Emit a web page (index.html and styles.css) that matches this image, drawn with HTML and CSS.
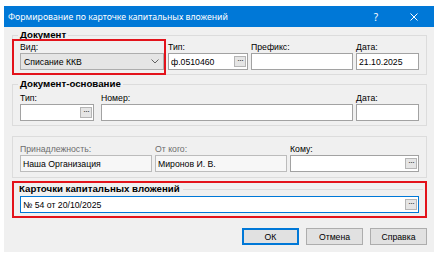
FILE: index.html
```html
<!DOCTYPE html>
<html lang="ru">
<head>
<meta charset="utf-8">
<title>Формирование по карточке капитальных вложений</title>
<link rel="stylesheet" href="styles.css">
</head>
<body>
<div class="win">
  <div class="titlebar">
    <span class="ttl">Формирование по карточке капитальных вложений</span>
    <span class="help">?</span>
    <svg class="close" width="8" height="8" viewBox="0 0 8 8"><path d="M0.5 0.5L7.5 7.5M7.5 0.5L0.5 7.5" stroke="#fff" stroke-width="1" fill="none"/></svg>
  </div>
  <div class="content">
    <div class="group g1">
      <div class="gtitle">Документ</div>
      <div class="row r1">
        <div class="cell">
          <div class="lbl">Вид:</div>
          <div class="combo"><span>Списание ККВ</span><svg class="chev" width="8" height="5" viewBox="0 0 8 5"><path d="M0.5 0.5L4 4L7.5 0.5" stroke="#606060" stroke-width="1" fill="none"/></svg></div>
        </div>
        <div class="cell">
          <div class="lbl">Тип:</div>
          <div class="field"><span class="val">ф.0510460</span><span class="dots">···</span></div>
        </div>
        <div class="cell">
          <div class="lbl">Префикс:</div>
          <div class="field"></div>
        </div>
        <div class="cell">
          <div class="lbl">Дата:</div>
          <div class="field"><span class="val">21.10.2025</span></div>
        </div>
      </div>
      <div class="mark"></div>
    </div>

    <div class="group g2">
      <div class="gtitle">Документ-основание</div>
      <div class="row r2">
        <div class="cell">
          <div class="lbl">Тип:</div>
          <div class="field"><span class="val"></span><span class="dots">···</span></div>
        </div>
        <div class="cell">
          <div class="lbl">Номер:</div>
          <div class="field"></div>
        </div>
        <div class="cell">
          <div class="lbl">Дата:</div>
          <div class="field"></div>
        </div>
      </div>
    </div>

    <div class="group g3">
      <div class="row r3">
        <div class="cell">
          <div class="lbl dim">Принадлежность:</div>
          <div class="field ro"><span class="val">Наша Организация</span></div>
        </div>
        <div class="cell">
          <div class="lbl dim">От кого:</div>
          <div class="field ro"><span class="val">Миронов И. В.</span></div>
        </div>
        <div class="cell">
          <div class="lbl">Кому:</div>
          <div class="field"><span class="val"></span><span class="dots">···</span></div>
        </div>
      </div>
    </div>

    <div class="hlgroup">
      <div class="hltitle"><span>Карточки капитальных вложений</span></div>
      <div class="field focus"><span class="val">№ 54 от 20/10/2025</span><span class="dots">···</span></div>
    </div>

    <div class="buttons">
      <button class="btn default">ОК</button>
      <button class="btn">Отмена</button>
      <button class="btn">Справка</button>
    </div>
  </div>
</div>
</body>
</html>
```

FILE: styles.css
```css
* { box-sizing: border-box; }
html, body { margin: 0; padding: 0; background: #ffffff; }
body {
  font-family: "Liberation Sans", Arial, sans-serif;
  font-size: 8.7px;
  color: #000;
}
.win {
  margin: 6px 0 0 4px;
  width: 430px;
  height: 246px;
  background: #f0f0f0;
  display: flex;
  flex-direction: column;
}
.titlebar {
  height: 21px;
  background: #0078d7;
  color: #fff;
  display: flex;
  align-items: center;
  padding-left: 4px;
  font-family: "Noto Sans", sans-serif;
  font-size: 8.7px;
}
.ttl { flex: 1; white-space: nowrap; }
.help { margin-right: 32px; font-size: 10px; }
.close { margin-right: 16px; }
.content { flex: 1; display: flex; flex-direction: column; }

.group {
  position: relative;
  border: 1px solid #dcdcdc;
  margin: 0 7px 0 8px;
  padding: 0 7px 4px 7px;
}
.g1 { margin-top: 8px; }
.g2 { margin-top: 9px; }
.g3 { margin-top: 10px; padding-top: 6px; padding-bottom: 5px; }
.gtitle {
  width: fit-content;
  margin-top: -8px;
  margin-left: -2px;
  padding: 0 2px;
  height: 13px;
  line-height: 13px;
  font-weight: bold;
  font-size: 9.7px;
  background: #f0f0f0;
}
.row { display: grid; column-gap: 3px; }
.r1 { grid-template-columns: 145px 80px 102px 63px; }
.r2 { grid-template-columns: 78px 1fr 63px; margin-top: 2px; }
.r2 .cell:first-child .field { width: 74px; }
.r3 { grid-template-columns: 132px 132px 1fr; }
.lbl { height: 12px; line-height: 12px; white-space: nowrap; }
.lbl.dim { color: #6d6d6d; }

.field {
  height: 17px;
  border: 1px solid #a2a2a2;
  background: #fff;
  display: flex;
  align-items: center;
  padding: 0 1px 0 2px;
}
.field.ro { background: #f7f7f7; border-color: #bcbcbc; }
.field.focus { border-color: #0078d7; }
.val { flex: 1; white-space: nowrap; }
.dots {
  width: 12px;
  height: 11px;
  border: 1px solid #b5b5b5;
  background: #e5e5e5;
  font-size: 9px;
  line-height: 7px;
  text-align: center;
  letter-spacing: -1px;
  color: #333;
  margin-left: auto;
}
.combo {
  height: 17px;
  width: 144px;
  border: 1px solid #adadad;
  background: #e5e5e5;
  display: flex;
  align-items: center;
  padding: 0 4px 0 3px;
}
.combo span { flex: 1; }
.mark {
  position: absolute;
  left: -1px;
  top: 3px;
  width: 154px;
  bottom: -1px;
  border: 2px solid #e3131b;
}

.hlgroup {
  border: 2px solid #e3131b;
  margin: 3px 7px 0 8px;
  padding: 0 6px 3px 6px;
}
.hltitle {
  height: 12px;
  line-height: 12px;
  display: flex;
  align-items: center;
  margin-left: -1px;
  font-weight: bold;
  font-size: 9.7px;
}
.hltitle::after {
  content: "";
  flex: 1;
  border-top: 1px solid #dcdcdc;
  margin-left: 3px;
  margin-right: -4px;
}
.hlgroup .field { margin-top: 1px; }

.buttons {
  display: flex;
  justify-content: flex-end;
  gap: 7px;
  margin-top: 10px;
  padding-right: 7px;
}
.btn {
  width: 57px;
  height: 17px;
  border: 1px solid #adadad;
  background: #e1e1e1;
  font-family: "Liberation Sans", Arial, sans-serif;
  font-size: 8.7px;
  padding: 0;
  color: #000;
}
.btn.default { border: 2px solid #0078d7; }
```
